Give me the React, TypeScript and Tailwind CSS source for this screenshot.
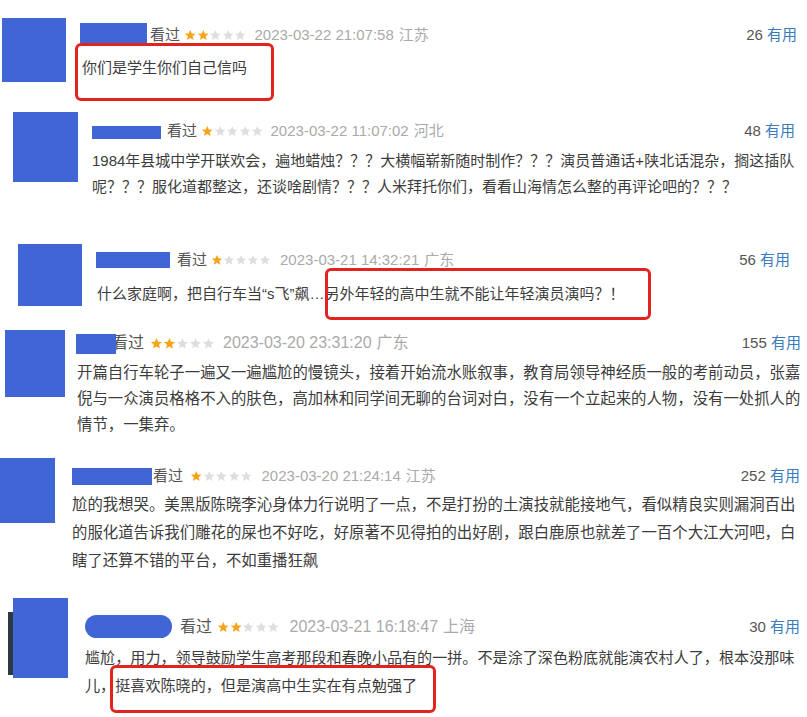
import React from 'react';

const STAR = 'M12 1.8l3 6.9 7.3.6-5.6 4.8 1.7 7.2L12 17.5l-6.4 3.8 1.7-7.2-5.6-4.8 7.3-.6z';

type Review = {
  box: string;
  strip?: string;
  avatar: string;
  content: string;
  header: string;
  headText: string;
  bar: string;
  seen: string;
  starsCls: string;
  starSize: number;
  dateCls: string;
  body: string;
  mark?: string;
  stars: number;
  date: string;
  loc: string;
  count: string;
  lines: string[];
};

const reviews: Review[] = [
  {
    box: 'h-[105px]',
    avatar: 'ml-[2px] mt-[18px] w-[64px] h-[64px]',
    content: 'ml-[14px] pr-[10px]',
    header: 'mt-[23px] h-[24px]',
    headText: 'text-[15px]',
    bar: 'self-start w-[67px] h-[20px]',
    seen: 'ml-[3px]',
    starsCls: 'ml-[4px]',
    starSize: 12.5,
    dateCls: 'ml-[8px]',
    body: 'mt-[8px] ml-[2px] text-[15px] leading-[26px]',
    mark: 'left-[75px] top-[43px] w-[199px] h-[58px]',
    stars: 2,
    date: '2023-03-22 21:07:58',
    loc: '江苏',
    count: '26',
    lines: ['你们是学生你们自己信吗'],
  },
  {
    box: 'h-[120px]',
    avatar: 'ml-[13px] mt-[7px] w-[65px] h-[70px]',
    content: 'ml-[14px] pr-[12px]',
    header: 'mt-[15px] h-[22px]',
    headText: 'text-[15px]',
    bar: 'self-start mt-[6px] w-[69px] h-[13px]',
    seen: 'ml-[6px]',
    starsCls: 'ml-[4px]',
    starSize: 12.5,
    dateCls: 'ml-[7px]',
    body: 'mt-[6px] text-[15px] leading-[26px]',
    stars: 1,
    date: '2023-03-22 11:07:02',
    loc: '河北',
    count: '48',
    lines: [
      '1984年县城中学开联欢会，遍地蜡烛？？？大横幅崭新随时制作？？？演员普通话+陕北话混杂，搁这插队',
      '呢？？？服化道都整这，还谈啥剧情？？？人米拜托你们，看看山海情怎么整的再评论吧的？？？',
    ],
  },
  {
    box: 'h-[97px]',
    avatar: 'ml-[18px] mt-[19px] w-[64px] h-[62px]',
    content: 'ml-[14px] pr-[17px]',
    header: 'mt-[24px] h-[22px]',
    headText: 'text-[15px]',
    bar: 'self-start mt-[3px] w-[74px] h-[16px]',
    seen: 'ml-[7px]',
    starsCls: 'ml-[4px]',
    starSize: 12,
    dateCls: 'ml-[9px]',
    body: 'mt-[10px] ml-[1px] text-[15px] leading-[26px]',
    mark: 'left-[325px] top-[43px] w-[326px] h-[52px]',
    stars: 1,
    date: '2023-03-21 14:32:21',
    loc: '广东',
    count: '56',
    lines: ['什么家庭啊，把自行车当“s飞”飙…另外年轻的高中生就不能让年轻演员演吗？！'],
  },
  {
    box: 'h-[128px]',
    avatar: 'ml-[5px] mt-[8px] w-[60px] h-[67px]',
    content: 'ml-[11px] pr-[6px]',
    header: 'mt-[10px] h-[22px]',
    headText: 'text-[16px]',
    bar: 'relative z-10 self-start mt-[2px] w-[40px] h-[20px]',
    seen: '-ml-[4px]',
    starsCls: 'ml-[6px]',
    starSize: 13,
    dateCls: 'ml-[8px]',
    body: 'mt-[6px] ml-[1px] text-[15.4px] leading-[26px]',
    stars: 2,
    date: '2023-03-20 23:31:20',
    loc: '广东',
    count: '155',
    lines: [
      '开篇自行车轮子一遍又一遍尴尬的慢镜头，接着开始流水账叙事，教育局领导神经质一般的考前动员，张嘉',
      '倪与一众演员格格不入的肤色，高加林和同学间无聊的台词对白，没有一个立起来的人物，没有一处抓人的',
      '情节，一集弃。',
    ],
  },
  {
    box: 'h-[135px]',
    avatar: 'mt-[8px] w-[55px] h-[65px]',
    content: 'ml-[17px] pr-[7px]',
    header: 'mt-[15px] h-[22px]',
    headText: 'text-[15px]',
    bar: 'self-start mt-[3px] w-[80px] h-[17px]',
    seen: 'ml-[1px]',
    starsCls: 'ml-[7px]',
    starSize: 12.5,
    dateCls: 'ml-[9px]',
    body: 'mt-[4px] text-[15.4px] leading-[28px]',
    stars: 1,
    date: '2023-03-20 21:24:14',
    loc: '江苏',
    count: '252',
    lines: [
      '尬的我想哭。美黑版陈晓李沁身体力行说明了一点，不是打扮的土演技就能接地气，看似精良实则漏洞百出',
      '的服化道告诉我们雕花的屎也不好吃，好原著不见得拍的出好剧，跟白鹿原也就差了一百个大江大河吧，白',
      '瞎了还算不错的平台，不如重播狂飙',
    ],
  },
  {
    box: 'h-[132px]',
    strip: 'ml-[8px] mt-[27px] w-[5px] h-[63px]',
    avatar: 'mt-[13px] w-[55px] h-[80px]',
    content: 'ml-[17px] pr-[7px]',
    header: 'mt-[31px] h-[22px]',
    headText: 'text-[16px]',
    bar: 'self-start -mt-[1px] w-[87px] h-[23px] rounded-full',
    seen: 'ml-[8px]',
    starsCls: 'ml-[5px]',
    starSize: 12.5,
    dateCls: 'ml-[10px]',
    body: 'mt-[6px] text-[15.1px] leading-[28px]',
    mark: 'left-[110px] top-[80px] w-[326px] h-[48px]',
    stars: 2,
    date: '2023-03-21 16:18:47',
    loc: '上海',
    count: '30',
    lines: [
      '尴尬，用力，领导鼓励学生高考那段和春晚小品有的一拼。不是涂了深色粉底就能演农村人了，根本没那味',
      '儿，挺喜欢陈晓的，但是演高中生实在有点勉强了',
    ],
  },
];

function Stars({ n, size }: { n: number; size: number }) {
  return (
    <span className="flex items-center">
      {[0, 1, 2, 3, 4].map((i) => (
        <svg key={i} width={size} height={size} viewBox="0 0 24 24">
          <path d={STAR} fill={i < n ? '#f7a41c' : '#dedede'} />
        </svg>
      ))}
    </span>
  );
}

function ReviewItem({ r }: { r: Review }) {
  return (
    <div className={`relative flex items-start ${r.box}`}>
      {r.strip && <div className={`shrink-0 bg-[#2c3a44] ${r.strip}`} />}
      <div className={`shrink-0 bg-[#4066d6] ${r.avatar}`} />
      <div className={`flex-1 min-w-0 flex flex-col ${r.content}`}>
        {/* user line: name, rating, time, place, votes */}
        <div className={`flex items-center whitespace-nowrap ${r.header} ${r.headText}`}>
          <div className={`shrink-0 bg-[#4066d6] ${r.bar}`} />
          <span className={`text-[#555] ${r.seen}`}>看过</span>
          <span className={r.starsCls}>
            <Stars n={r.stars} size={r.starSize} />
          </span>
          <span className={`text-[#aaa] ${r.dateCls}`}>{r.date}</span>
          <span className="ml-[5px] text-[#aaa]">{r.loc}</span>
          <span className="ml-auto text-[15px] text-[#555]">
            {r.count} <span className="text-[#3a7bbd]">有用</span>
          </span>
        </div>
        <div className={`text-[#3c3c3c] ${r.body}`}>
          {r.lines.map((l, i) => (
            <div key={i} className="whitespace-nowrap">
              {l}
            </div>
          ))}
        </div>
      </div>
      {r.mark && (
        <div className={`absolute border-[3px] border-[#e3231f] rounded-[6px] ${r.mark}`} />
      )}
    </div>
  );
}

export default function App() {
  return (
    <div className="w-[807px] h-[717px] bg-white overflow-hidden flex flex-col font-['Liberation_Sans','Noto_Sans_CJK_SC',sans-serif]">
      {reviews.map((r, i) => (
        <ReviewItem key={i} r={r} />
      ))}
    </div>
  );
}
